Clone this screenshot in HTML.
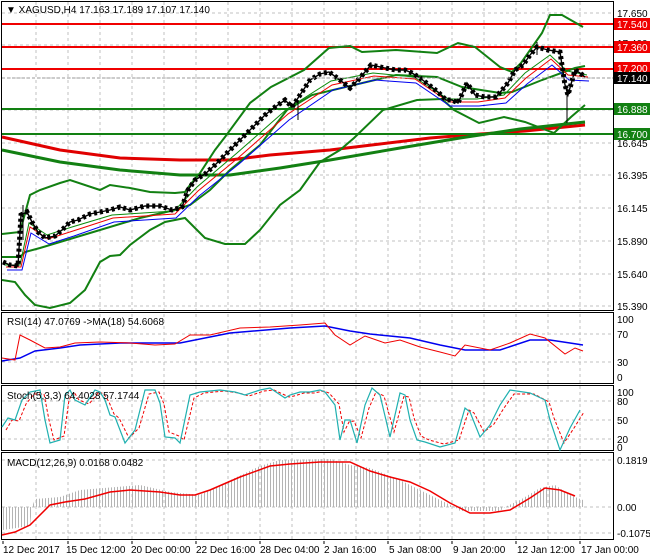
<!DOCTYPE html>
<html><head><meta charset="utf-8"><style>
html,body{margin:0;padding:0;background:#fff;width:650px;height:560px;overflow:hidden}
svg{display:block;font-family:"Liberation Sans",Arial,sans-serif;font-size:10px}
</style></head><body>
<svg width="650" height="560" viewBox="0 0 650 560" xmlns="http://www.w3.org/2000/svg">
<defs>
<pattern id="hb" width="3" height="10" patternUnits="userSpaceOnUse"><rect x="0" y="0" width="1" height="10" fill="#b4b4b4"/></pattern>
</defs>
<rect width="650" height="560" fill="#fff"/>
<g stroke="#c0c0c0" stroke-dasharray="3,3" stroke-width="1">
<path d="M36 2V540M68 2V540M100 2V540M132 2V540M164 2V540M196 2V540M228 2V540M260 2V540M292 2V540M324 2V540M356 2V540M388 2V540M420 2V540M452 2V540M484 2V540M516 2V540M548 2V540M580 2V540"/>
<path d="M2 13H613M2 45H613M2 78H613M2 110H613M2 143H613M2 175H613M2 208H613M2 241H613M2 274H613M2 306H613"/>
<path d="M2 334H613M2 362H613M2 401H613M2 420H613M2 439H613M2 460H613M2 507H613M2 533H613"/>
</g>
<polyline fill="none" stroke="#e00000" stroke-width="3" points="2,137 60,150 120,158 180,160 230,160 270,155 330,150 380,144 430,138 480,134 525,131 585,125"/>
<polyline fill="none" stroke="#128012" stroke-width="3" points="2,150 60,162 120,170 180,175 230,175 280,168 330,160 400,148 460,138 520,129 585,122"/>
<path d="M2 24H613M2 47H613M2 69H613" stroke="#f00000" stroke-width="2"/>
<path d="M2 109H613M2 134H613" stroke="#128012" stroke-width="2"/>
<g fill="none" stroke="#128012" stroke-width="2">
<polyline points="2,234 20,232 30,195 40,190 60,183 70,180 100,190 110,185 130,188 150,192 175,193 185,192 190,185 200,173 215,150 225,137 250,103 271,87 304,70 329,48 350,46 362,52 396,50 437,53 458,43 475,47 500,67 512,72 521,63 542,33 550,15 562,15 583,27"/>
<polyline points="2,257 20,257 25,252 40,248 100,230 140,218 175,210 190,205 210,190 230,170 260,145 287,110 312,95 354,85 396,75 437,77 462,87 500,93 512,92 542,80 575,68 585,66"/>
<polyline points="2,280 15,282 25,295 35,305 50,308 70,303 85,290 100,262 110,256 120,255 130,245 150,230 165,222 185,218 195,228 205,238 225,244 245,244 260,230 280,205 300,190 320,162 340,150 354,138 383,110 417,100 442,99 454,110 479,123 504,117 525,122 554,133 571,117 585,105"/>
</g>
<polyline fill="none" stroke="#0a8a0a" stroke-width="1" transform="translate(2,3)" points="3,262 18,262 27,220 45,232 70,224 110,212 172,208 195,184 235,150 285,106 329,78 371,70 412,74 446,96 475,96 502,92 523,70 548,52 565,68 585,72"/>
<polyline fill="none" stroke="#f00000" stroke-width="1" transform="translate(3,5)" points="3,262 18,262 27,222 45,234 70,226 110,213 172,209 195,186 235,153 285,109 329,80 371,71 412,74 446,97 475,97 502,93 523,73 548,54 565,70 585,72"/>
<polyline fill="none" stroke="#0000f0" stroke-width="1" transform="translate(4,8)" points="3,262 18,262 27,225 45,236 70,228 110,214 172,210 195,188 235,156 285,112 329,82 371,72 412,75 446,98 475,98 502,95 523,76 548,57 565,72 585,73"/>
<polyline fill="none" stroke="#000" stroke-width="1.4" points="3,262 10,265 18,266 21,215 27,212 32,222 38,232 45,238 55,236 62,230 70,222 78,220 90,214 100,212 110,210 120,207 130,210 145,206 160,206 172,210 182,207 188,190 195,180 205,174 215,165 225,155 235,145 245,135 255,125 265,115 275,107 285,100 292,107 300,95 310,80 320,74 329,72 340,80 350,88 358,80 371,65 385,68 396,70 405,70 412,73 420,78 429,85 438,92 446,100 452,100 458,103 467,83 475,95 485,97 496,97 502,90 508,83 515,70 523,65 530,55 537,47 548,50 560,52 565,85 568,95 575,70 580,73 585,77"/>
<polyline fill="none" stroke="#000" stroke-width="5" stroke-dasharray="3,3" points="3,262 10,265 18,266 21,215 27,212 32,222 38,232 45,238 55,236 62,230 70,222 78,220 90,214 100,212 110,210 120,207 130,210 145,206 160,206 172,210 182,207 188,190 195,180 205,174 215,165 225,155 235,145 245,135 255,125 265,115 275,107 285,100 292,107 300,95 310,80 320,74 329,72 340,80 350,88 358,80 371,65 385,68 396,70 405,70 412,73 420,78 429,85 438,92 446,100 452,100 458,103 467,83 475,95 485,97 496,97 502,90 508,83 515,70 523,65 530,55 537,47 548,50 560,52 565,85 568,95 575,70 580,73 585,77"/>
<path d="M567 87V123M537 42V55M298 100V120M23 205V240" stroke="#000"/>
<path d="M2 78H613" stroke="#999" stroke-dasharray="3,2"/>
<g fill="none" stroke="#000" stroke-width="1">
<rect x="1.5" y="1.5" width="612" height="309"/>
<rect x="1.5" y="312.5" width="612" height="71"/>
<rect x="1.5" y="385.5" width="612" height="65"/>
<rect x="1.5" y="452.5" width="612" height="87"/>
</g>
<polyline fill="none" stroke="#0000f0" stroke-width="1.5" points="2,361 20,358 35,351 60,348 80,345 120,343 180,343 230,333 290,328 325,326 350,331 370,334 410,338 440,345 465,350 500,350 530,340 550,340 570,343 583,345"/>
<polyline fill="none" stroke="#f00000" stroke-width="1" points="2,358 15,360 20,335 30,340 45,348 60,347 75,343 100,342 130,343 155,345 175,344 190,335 210,335 240,328 270,327 300,325 325,323 335,335 350,345 365,336 385,343 400,340 420,347 440,352 455,356 465,345 490,350 510,343 530,334 545,338 565,354 575,348 583,351"/>
<polyline fill="none" stroke="#f00000" stroke-dasharray="3,2" points="6,430 12,420 19,421 26,404 34,394 44,394 49,420 54,440 64,436 69,400 74,392 79,400 89,404 99,392 104,394 109,402 114,414 119,418 129,438 139,428 149,394 159,392 164,404 169,432 179,436 184,440 194,398 204,393 224,391 239,393 249,396 264,391 274,390 289,397 294,396 304,393 314,393 324,391 329,393 339,404 344,432 349,422 354,421 361,438 369,408 376,392 384,396 394,432 404,396 409,397 414,418 421,436 429,440 444,444 459,440 469,410 474,413 484,432 494,424 504,408 514,394 534,394 549,402 554,418 564,443 574,428 584,412"/>
<polyline fill="none" stroke="#20b0b0" stroke-width="1.2" points="2,427 8,418 15,420 22,400 30,392 40,390 45,420 50,443 60,440 65,395 70,390 75,400 85,405 95,390 100,392 105,400 110,415 115,417 125,443 135,430 145,390 155,390 160,403 165,437 175,438 180,443 190,395 200,392 220,390 235,392 245,395 260,390 270,388 285,398 290,395 300,392 310,392 320,390 325,392 335,405 340,440 345,420 350,420 357,443 365,405 372,388 380,395 390,437 400,393 405,395 410,420 417,440 425,442 440,447 455,443 465,408 470,412 480,437 490,425 500,405 510,390 530,393 545,400 550,420 560,450 570,428 580,410"/>
<polygon fill="url(#hb)" points="3,507 3,530 30,526 32,507 35,499 60,497 80,490 140,485 170,492 200,495 220,485 260,466 280,460 330,459 350,465 370,468 400,480 440,500 455,507 460,511 500,511 505,507 520,500 540,488 555,485 570,495 583,500 583,507"/>
<polyline fill="none" stroke="#f00000" stroke-width="1.5" points="2,535 15,532 30,525 50,505 65,502 85,499 110,492 130,490 160,492 180,495 195,495 210,490 240,477 270,466 290,464 320,462 350,462 370,471 390,477 410,482 430,491 450,503 470,513 490,513 510,510 530,498 545,488 560,490 575,496"/>
<g fill="#000" font-size="10">
<text x="617" y="17">17.650</text>
<text x="617" y="47">17.400</text>
<text x="617" y="147">16.645</text>
<text x="617" y="179">16.395</text>
<text x="617" y="212">16.145</text>
<text x="617" y="245">15.890</text>
<text x="617" y="278">15.640</text>
<text x="617" y="310">15.390</text>
<text x="617" y="323">100</text>
<text x="617" y="338">70</text>
<text x="617" y="366">30</text>
<text x="617" y="381">0</text>
<text x="617" y="396">100</text>
<text x="617" y="405">80</text>
<text x="617" y="424">50</text>
<text x="617" y="443">20</text>
<text x="617" y="451">0</text>
<text x="617" y="464">0.1819</text>
<text x="617" y="511">0.00</text>
<text x="617" y="537">-0.1075</text>
</g>
<g font-size="10">
<rect x="614" y="18" width="36" height="12" fill="#f00000"/><text x="617" y="28" fill="#fff">17.540</text>
<rect x="614" y="41" width="36" height="12" fill="#f00000"/><text x="617" y="51" fill="#fff">17.360</text>
<rect x="614" y="62" width="36" height="12" fill="#f00000"/><text x="617" y="72" fill="#fff">17.200</text>
<rect x="614" y="72" width="36" height="12" fill="#000"/><text x="617" y="82" fill="#fff">17.140</text>
<rect x="614" y="103" width="36" height="12" fill="#128012"/><text x="617" y="113" fill="#fff">16.888</text>
<rect x="614" y="128" width="36" height="12" fill="#128012"/><text x="617" y="138" fill="#fff">16.700</text>
</g>
<g font-size="10" fill="#000">
<text x="3" y="553">12 Dec 2017</text>
<text x="66" y="553">15 Dec 12:00</text>
<text x="131" y="553">20 Dec 00:00</text>
<text x="196" y="553">22 Dec 16:00</text>
<text x="260" y="553">28 Dec 04:00</text>
<text x="324" y="553">2 Jan 16:00</text>
<text x="389" y="553">5 Jan 08:00</text>
<text x="453" y="553">9 Jan 20:00</text>
<text x="517" y="553">12 Jan 12:00</text>
<text x="581" y="553">17 Jan 00:00</text>
</g>
<path d="M3 541v3M68 541v3M132 541v3M196 541v3M260 541v3M324 541v3M388 541v3M452 541v3M516 541v3M580 541v3" stroke="#000"/>
<g font-size="10" fill="#000">
<text x="6" y="13">▼ XAGUSD,H4  17.163 17.189 17.107 17.140</text>
<text x="7" y="325">RSI(14) 47.0769  -&gt;MA(18) 54.6068</text>
<text x="7" y="399">Stoch(5,3,3) 64.4028 57.1744</text>
<text x="7" y="466">MACD(12,26,9) 0.0168 0.0482</text>
</g>
</svg>
</body></html>
